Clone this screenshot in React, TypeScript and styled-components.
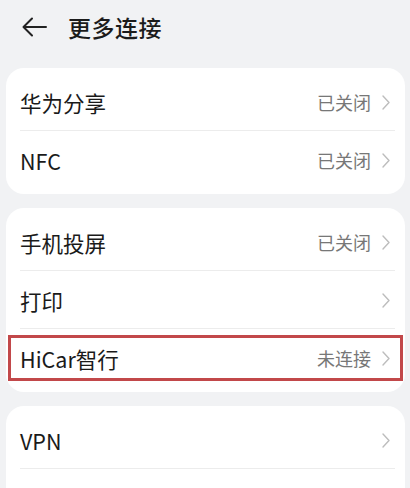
import React from "react";
import styled, { createGlobalStyle } from "styled-components";

const Global = createGlobalStyle`
  html, body { margin: 0; padding: 0; background: #f1f2f4; }
  body { font-family: "Noto Sans CJK SC", "Noto Sans", sans-serif; overflow: hidden; }
`;

const Page = styled.div`
  width: 410px;
  height: 488px;
  overflow: hidden;
  background: #f1f2f4;
  display: flex;
  flex-direction: column;
  padding: 0 5px 0 6px;
  box-sizing: border-box;
`;

const Header = styled.div`
  flex-shrink: 0;
  height: 54px;
  display: flex;
  align-items: center;
  gap: 21px;
  padding-left: 16px;
  margin-bottom: 14px;
`;

const Title = styled.div`
  font-size: 23px;
  font-weight: 500;
  color: #1b1b1b;
  letter-spacing: 0.5px;
`;

const Cards = styled.div`
  flex-shrink: 0;
  display: flex;
  flex-direction: column;
  gap: 14px;
`;

const Card = styled.div`
  background: #ffffff;
  border-radius: 18px;
  padding: 5px 0;
  display: flex;
  flex-direction: column;
`;

const Row = styled.div<{ $divider?: boolean }>`
  position: relative;
  height: 58px;
  display: flex;
  align-items: center;
  justify-content: space-between;
  padding: 0 15px 0 14px;
  &::after {
    content: "";
    display: ${(p) => (p.$divider ? "block" : "none")};
    position: absolute;
    left: 14px;
    right: 10px;
    bottom: 0;
    height: 1px;
    background: #ececec;
  }
`;

const Label = styled.div`
  font-size: 21.5px;
  color: #1a1a1a;
`;

const Right = styled.div`
  display: flex;
  align-items: center;
  gap: 11px;
`;

const Value = styled.div`
  font-size: 18px;
  color: #777777;
`;

const Highlight = styled.div`
  position: absolute;
  left: 2px;
  right: 2px;
  top: 6px;
  bottom: 6px;
  border: 3px solid #c2484a;
  pointer-events: none;
`;

const Chevron = () => (
  <svg width="8" height="15" viewBox="0 0 8 15" fill="none">
    <path d="M1 1l6 6.5L1 14" stroke="#bdbdbd" strokeWidth="1.4" strokeLinecap="round" strokeLinejoin="round" />
  </svg>
);

const BackArrow = () => (
  <svg width="25" height="20" viewBox="0 0 25 20" fill="none">
    <path d="M24 10H2M10 1.5L1.5 10l8.5 8.5" stroke="#222" strokeWidth="2" strokeLinecap="round" strokeLinejoin="round" />
  </svg>
);

type Item = { label: string; value?: string; highlight?: boolean };

const groups: Item[][] = [
  [
    { label: "华为分享", value: "已关闭" },
    { label: "NFC", value: "已关闭" },
  ],
  [
    { label: "手机投屏", value: "已关闭" },
    { label: "打印" },
    { label: "HiCar智行", value: "未连接", highlight: true },
  ],
  [
    { label: "VPN" },
    { label: "私人DNS", value: "已关闭" },
  ],
];

export default function App() {
  return (
    <>
      <Global />
      <Page>
        <Header>
          <BackArrow />
          <Title>更多连接</Title>
        </Header>
        <Cards>
          {groups.map((g, gi) => (
            <Card key={gi}>
              {g.map((it, i) => (
                <Row key={it.label} $divider={i < g.length - 1}>
                  <Label>{it.label}</Label>
                  <Right>
                    {it.value && <Value>{it.value}</Value>}
                    <Chevron />
                  </Right>
                  {it.highlight && <Highlight />}
                </Row>
              ))}
            </Card>
          ))}
        </Cards>
      </Page>
    </>
  );
}
